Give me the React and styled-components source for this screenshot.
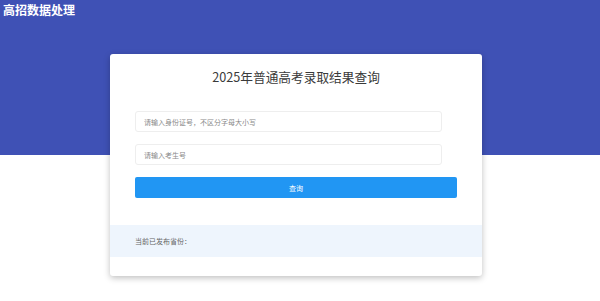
import React from "react";
import styled, { createGlobalStyle } from "styled-components";

const GlobalStyle = createGlobalStyle`
  html, body {
    margin: 0;
    padding: 0;
    background: #fff;
    font-family: "Noto Sans CJK SC", "Noto Sans", sans-serif;
  }
`;

const Page = styled.div`
  min-height: 301px;
  background: linear-gradient(#3f51b5 0, #3f51b5 155px, #ffffff 155px);
  padding-right: 8px;
  box-sizing: border-box;
`;

const Brand = styled.div`
  height: 54px;
  padding: 1px 0 0 3px;
  box-sizing: border-box;
  color: #fff;
  font-size: 12px;
  font-weight: 700;
  line-height: 18px;
`;

const Card = styled.div`
  width: 372px;
  margin: 0 auto;
  background: #fff;
  border-radius: 3px;
  box-shadow: 0 2px 6px rgba(0, 0, 0, 0.25);
  padding: 13px 0 19px;
  box-sizing: border-box;
`;

const Title = styled.h1`
  margin: 0;
  text-align: center;
  font-size: 12.7px;
  font-weight: 400;
  line-height: 20px;
  color: #3a3a3a;
`;

const Form = styled.div`
  display: flex;
  flex-direction: column;
  gap: 12px;
  padding: 24px 25px 27px;
`;

const Field = styled.input`
  width: 307px;
  height: 21px;
  box-sizing: border-box;
  border: 1px solid #eeeeee;
  border-radius: 3px;
  padding: 0 8px;
  font-family: "Noto Sans CJK SC", "Noto Sans", sans-serif;
  font-size: 7px;
  color: #333;
  outline: none;

  &::placeholder {
    color: #8a8a8a;
  }
`;

const Button = styled.button`
  height: 21px;
  border: none;
  border-radius: 2px;
  background: #2196f3;
  color: #fff;
  font-family: inherit;
  font-size: 7px;
  cursor: pointer;
`;

const Published = styled.div`
  height: 32px;
  display: flex;
  align-items: center;
  padding: 0 25px;
  background: #eef5fd;
  color: #666;
  font-size: 7px;
`;

export default function App() {
  return (
    <>
      <GlobalStyle />
      <Page>
        <Brand>高招数据处理</Brand>
        <Card>
          <Title>2025年普通高考录取结果查询</Title>
          <Form>
            <Field placeholder="请输入身份证号，不区分字母大小写" />
            <Field placeholder="请输入考生号" />
            <Button>查询</Button>
          </Form>
          <Published>当前已发布省份：</Published>
        </Card>
      </Page>
    </>
  );
}
